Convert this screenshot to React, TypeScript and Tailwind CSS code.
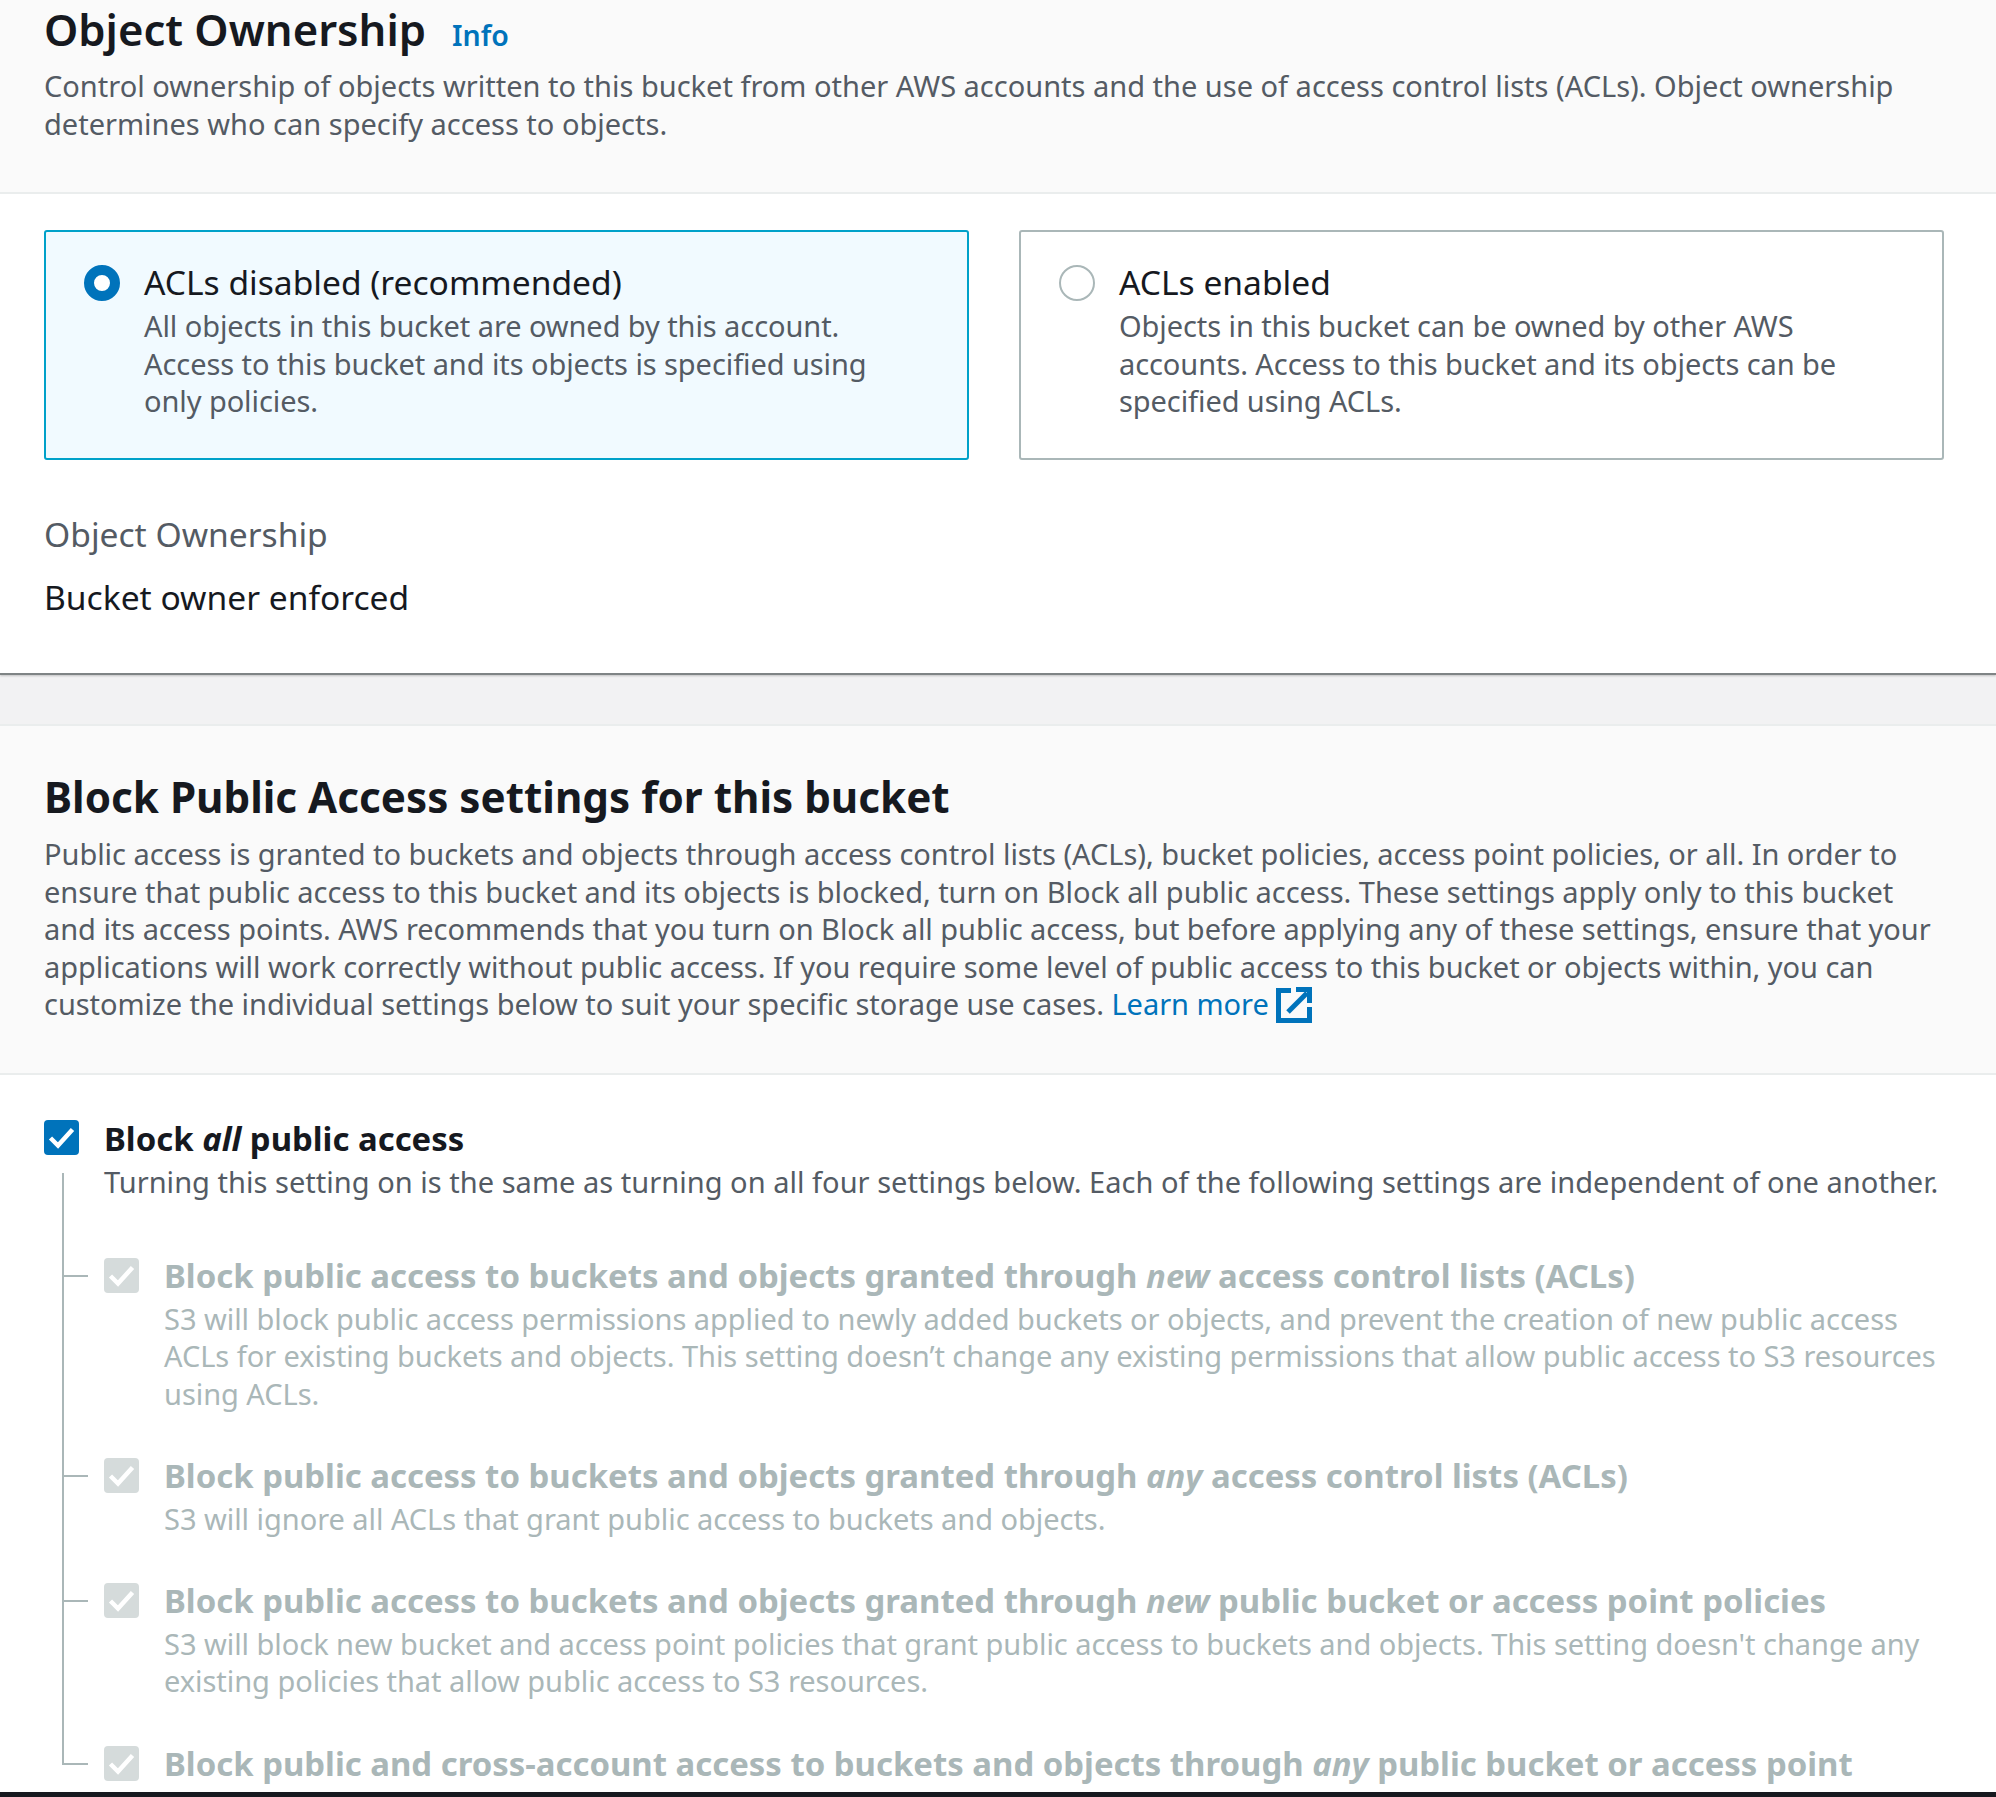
function Check({ disabled }: { disabled?: boolean }) {
  return (
    <div className={`w-[35px] h-[35px] rounded-[4px] flex items-center justify-center shrink-0 ${disabled ? "bg-[#d5dbdb] mt-[1px]" : "bg-[#0073bb]"}`}>
      <svg viewBox="0 0 35 35" className="w-[35px] h-[35px]" fill="none">
        <path d="M6.5 18 L14 25.5 L28.5 9.5" stroke="#fff" strokeWidth="4.5" />
      </svg>
    </div>
  );
}

function Sub({ y, title, children }: { y: string; title: React.ReactNode; children?: React.ReactNode }) {
  return (
    <div className={`relative flex gap-[25px] ${y}`}>
      <div className="absolute left-[-42px] top-[18px] w-[26px] h-[2px] bg-[#aab7b8]" />
      <Check disabled />
      <div className="text-[#aab7b8]">
        <div className="text-[32.9px] leading-[37.5px] font-bold whitespace-nowrap">{title}</div>
        <div className="mt-[5px] whitespace-nowrap tracking-[-0.04px]">{children}</div>
      </div>
    </div>
  );
}

export default function App() {
  return (
    <div className="h-[1797px] w-[1996px] flex flex-col overflow-hidden bg-[#f2f2f3] text-[29px] leading-[37.5px] font-['Noto_Sans','Open_Sans',sans-serif] text-[#16191f]">
      <div className="flex-1 overflow-hidden">
        <section className="bg-white border-b-[2px] border-[#7f8485] h-[675px] shadow-[0_1px_2px_rgba(0,0,0,0.2)]">
          <header className="bg-[#fafafa] border-b-[2px] border-[#eaeded] h-[194px] px-[44px]">
            <div className="flex items-baseline gap-[26px] h-[67px]">
              <h1 className="text-[43.6px] leading-[58px] font-semibold whitespace-nowrap">Object Ownership</h1>
              <span className="text-[#0073bb] text-[28.5px] font-semibold">Info</span>
            </div>
            <p className="text-[#545b64] whitespace-nowrap">
              Control ownership of objects written to this bucket from other AWS accounts and the use of access control lists (ACLs). Object ownership<br />
              determines who can specify access to objects.
            </p>
          </header>
          <div className="px-[44px] pt-[36px]">
            <div className="flex gap-[50px]">
              <div className="w-[925px] h-[230px] rounded-[3px] border-[2px] border-[#00a1c9] bg-[#f1faff] flex gap-[24px] pl-[38px] pt-[29px]">
                <div className="w-[36px] h-[36px] rounded-full border-[10px] border-[#0073bb] bg-white mt-[4px] shrink-0" />
                <div>
                  <div className="text-[33.6px] leading-[43px] mb-[3px]">ACLs disabled (recommended)</div>
                  <div className="text-[#545b64] whitespace-nowrap tracking-[-0.08px]">
                    All objects in this bucket are owned by this account.<br />
                    Access to this bucket and its objects is specified using<br />
                    only policies.
                  </div>
                </div>
              </div>
              <div className="w-[925px] h-[230px] rounded-[3px] border-[2px] border-[#aab7b8] bg-white flex gap-[24px] pl-[38px] pt-[29px]">
                <div className="w-[36px] h-[36px] rounded-full border-[2px] border-[#aab7b8] bg-white mt-[4px] shrink-0" />
                <div>
                  <div className="text-[33.6px] leading-[43px] mb-[3px]">ACLs enabled</div>
                  <div className="text-[#545b64] whitespace-nowrap tracking-[-0.08px]">
                    Objects in this bucket can be owned by other AWS<br />
                    accounts. Access to this bucket and its objects can be<br />
                    specified using ACLs.
                  </div>
                </div>
              </div>
            </div>
            <div className="mt-[52px] text-[33.6px] leading-[44px] text-[#545b64]">Object Ownership</div>
            <div className="mt-[19px] text-[33.6px] leading-[44px]">Bucket owner enforced</div>
          </div>
        </section>

        <section className="mt-[49px] bg-white h-[1080px]">
          <header className="bg-[#fafafa] border-t-[2px] border-b-[2px] border-[#eaeded] h-[351px] px-[44px] pt-[43px]">
            <h2 className="text-[42.2px] leading-[56px] font-bold whitespace-nowrap">Block Public Access settings for this bucket</h2>
            <p className="text-[#545b64] whitespace-nowrap mt-[10px] tracking-[-0.04px]">
              Public access is granted to buckets and objects through access control lists (ACLs), bucket policies, access point policies, or all. In order to<br />
              ensure that public access to this bucket and its objects is blocked, turn on Block all public access. These settings apply only to this bucket<br />
              and its access points. AWS recommends that you turn on Block all public access, but before applying any of these settings, ensure that your<br />
              applications will work correctly without public access. If you require some level of public access to this bucket or objects within, you can<br />
              customize the individual settings below to suit your specific storage use cases.{" "}
              <span className="text-[#0073bb]">Learn more</span>
              <svg viewBox="0 0 36 36" className="inline-block w-[36px] h-[36px] ml-[7px] align-[-8px]" fill="none" stroke="#0073bb">
                <path d="M15 3.5 H2.5 V33.5 H33.5 V20" strokeWidth="5" />
                <path d="M12 25 L31 6" strokeWidth="5" />
                <path d="M20 2.5 H33.5 V16" strokeWidth="5" />
              </svg>
            </p>
          </header>
          <div className="relative px-[44px] pt-[45px]">
            <div className="absolute left-[62px] top-[98px] w-[2px] h-[592px] bg-[#aab7b8]" />
            <div className="flex gap-[25px]">
              <Check />
              <div>
                <div className="text-[32.9px] leading-[37.5px] font-bold">Block <i>all</i> public access</div>
                <div className="text-[#545b64] mt-[5px] whitespace-nowrap tracking-[0.03px]">Turning this setting on is the same as turning on all four settings below. Each of the following settings are independent of one another.</div>
              </div>
            </div>
            <div className="pl-[60px]">
              <Sub y="mt-[57px]" title={<>Block public access to buckets and objects granted through <i>new</i> access control lists (ACLs)</>}>
                S3 will block public access permissions applied to newly added buckets or objects, and prevent the creation of new public access<br />
                ACLs for existing buckets and objects. This setting doesn’t change any existing permissions that allow public access to S3 resources<br />
                using ACLs.
              </Sub>
              <Sub y="mt-[45px]" title={<>Block public access to buckets and objects granted through <i>any</i> access control lists (ACLs)</>}>
                S3 will ignore all ACLs that grant public access to buckets and objects.
              </Sub>
              <Sub y="mt-[45px]" title={<>Block public access to buckets and objects granted through <i>new</i> public bucket or access point policies</>}>
                S3 will block new bucket and access point policies that grant public access to buckets and objects. This setting doesn't change any<br />
                existing policies that allow public access to S3 resources.
              </Sub>
              <Sub y="mt-[45px]" title={<>Block public and cross-account access to buckets and objects through <i>any</i> public bucket or access point</>} />
            </div>
          </div>
        </section>
      </div>
      <div className="h-[5px] shrink-0 bg-[#16191f]" />
    </div>
  );
}
